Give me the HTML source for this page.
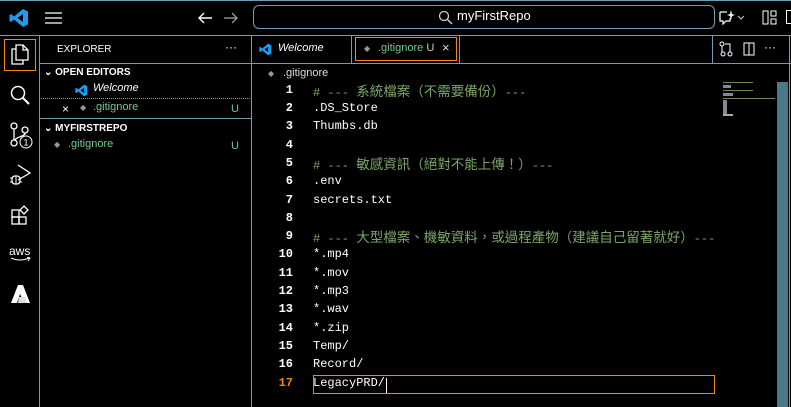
<!DOCTYPE html>
<html><head><meta charset="utf-8"><style>
*{margin:0;padding:0;box-sizing:border-box}
body{width:791px;height:407px;background:#000;overflow:hidden;position:relative;font-family:"Segoe UI","Liberation Sans",sans-serif;color:#fff}
.a{position:absolute}
.b{background:#6f9fb3}
.ln{position:absolute;left:253px;width:40px;text-align:right;font-family:"Liberation Mono",monospace;font-size:12px;color:#fff;font-weight:bold}
.cd{position:absolute;left:313px;font-family:"Liberation Mono","Noto Sans CJK TC",monospace;font-size:12px;color:#fff;white-space:pre}
.cm{color:#7ca668}
.cj{font-family:"Noto Sans CJK TC",sans-serif;font-size:13.5px;line-height:14px}
.sm{font-size:11px}
.g{color:#73c991}
</style></head><body>
<div class="a b" style="left:0;top:0;width:791px;height:1px"></div>
<div class="a b" style="left:0;top:35px;width:791px;height:1px"></div>
<svg class="a" style="left:9px;top:8px" width="20" height="20" viewBox="0 0 20 20"><path d="M14 1 L19 3.5 V16.5 L14 19 L5 11.5 L2 14 L0.5 13 V7 L2 6 L5 8.5 Z M14 6 L8.5 10 L14 14 Z" fill="#1f9cf0"/></svg>
<svg class="a" style="left:45px;top:11px" width="18" height="14"><path d="M0 2H17M0 7H17M0 12H17" stroke="#fff" stroke-width="1.3"/></svg>
<svg class="a" style="left:197px;top:10px" width="16" height="16"><path d="M15 8H2M7 3L2 8L7 13" stroke="#fff" fill="none" stroke-width="1.4"/></svg>
<svg class="a" style="left:223px;top:10px" width="16" height="16"><path d="M1 8H14M9 3L14 8L9 13" stroke="#aaa" fill="none" stroke-width="1.2"/></svg>
<div class="a" style="left:253px;top:5px;width:462px;height:24px;border:1px solid #6f9fb3;border-radius:6px"></div>
<svg class="a" style="left:438px;top:10px" width="15" height="15"><circle cx="6" cy="6" r="4.5" stroke="#ccc" fill="none" stroke-width="1.3"/><path d="M9.5 9.5L14 14" stroke="#ccc" stroke-width="1.5"/></svg>
<div class="a" style="left:457px;top:8px;font-size:13px">myFirstRepo</div>
<svg class="a" style="left:718px;top:8px" width="30" height="18"><path d="M2 4H9M2 4V13H5V16L8 13H12V10" stroke="#fff" fill="none" stroke-width="1.2"/><path d="M13 2L14 6L17 7L14 8L13 12L12 8L9 7L12 6Z" fill="#fff"/><path d="M20 8L23 11L26 8" stroke="#ccc" fill="none"/></svg>
<svg class="a" style="left:762px;top:10px" width="16" height="16"><rect x="1" y="1" width="5" height="13" stroke="#fff" fill="none"/><rect x="9" y="1" width="5" height="5" stroke="#fff" fill="none"/><rect x="9" y="9" width="5" height="5" stroke="#fff" fill="none"/></svg>
<div class="a" style="left:786px;top:10px;width:5px;height:14px;border:1px solid #fff;border-right:none"></div>
<div class="a b" style="left:39px;top:36px;width:1px;height:371px"></div>
<div class="a" style="left:4px;top:39px;width:32px;height:32px;border:1px solid #f38518"></div>
<svg class="a" style="left:10px;top:44px" width="20" height="22"><path d="M6 1H13L18 6V16H6Z M13 1V6H18 M6 5H2V20H13V16" stroke="#fff" fill="none" stroke-width="1.3"/></svg>
<svg class="a" style="left:9px;top:84px" width="22" height="22"><circle cx="9" cy="9" r="6.5" stroke="#fff" fill="none" stroke-width="1.5"/><path d="M13.5 13.5L20 20" stroke="#fff" stroke-width="2"/></svg>
<svg class="a" style="left:9px;top:122px" width="26" height="28"><circle cx="5" cy="4" r="3" stroke="#fff" fill="none" stroke-width="1.3"/><circle cx="5" cy="21" r="3" stroke="#fff" fill="none" stroke-width="1.3"/><circle cx="16" cy="8" r="3" stroke="#fff" fill="none" stroke-width="1.3"/><path d="M5 7V18M16 11C16 15 8 14 6 18" stroke="#fff" fill="none" stroke-width="1.3"/><circle cx="17" cy="20" r="6" fill="#000" stroke="#fff"/><text x="17" y="23.5" font-size="9" fill="#fff" text-anchor="middle" font-family="Liberation Sans">1</text></svg>
<svg class="a" style="left:9px;top:163px" width="24" height="24"><path d="M9 2L21 10L9 17" stroke="#fff" fill="none" stroke-width="1.3"/><rect x="3" y="13" width="8" height="8" rx="3" stroke="#fff" fill="none" stroke-width="1.3"/><path d="M1 15H3M1 19H3M11 15H13M11 19H13M7 13V21" stroke="#fff"/></svg>
<svg class="a" style="left:10px;top:205px" width="22" height="22"><rect x="2" y="5" width="7" height="7" stroke="#fff" fill="none" stroke-width="1.3"/><rect x="2" y="12" width="7" height="7" stroke="#fff" fill="none" stroke-width="1.3"/><rect x="9" y="12" width="7" height="7" stroke="#fff" fill="none" stroke-width="1.3"/><path d="M14 1L18 5L14 9L10 5Z" stroke="#fff" fill="none" stroke-width="1.3"/></svg>
<div class="a" style="left:9px;top:244px;font-size:12px;color:#fff">aws</div>
<svg class="a" style="left:10px;top:257px" width="22" height="6"><path d="M1 1Q10 5 19 1M17 0L20 1L18 4" stroke="#fff" fill="none"/></svg>
<svg class="a" style="left:10px;top:284px" width="22" height="20"><path d="M8 1H13L7 19H1Z" fill="#fff"/><path d="M13 1L20 19H14L10 10Z" fill="#fff"/><path d="M9 13H15L17 19H8Z" fill="#ddd"/></svg>
<div class="a b" style="left:251px;top:36px;width:1px;height:371px"></div>
<div class="a" style="left:57px;top:44px;font-size:10px">EXPLORER</div>
<div class="a" style="left:225px;top:40px;font-size:12px">···</div>
<div class="a b" style="left:40px;top:63px;width:211px;height:1px"></div>
<div class="a" style="left:44px;top:67px;font-size:10px;font-weight:bold">⌄ OPEN EDITORS</div>
<svg class="a" style="left:75px;top:84px" width="13" height="13" viewBox="0 0 20 20"><path d="M14 1 L19 3.5 V16.5 L14 19 L5 11.5 L2 14 L0.5 13 V7 L2 6 L5 8.5 Z M14 6 L8.5 10 L14 14 Z" fill="#1f9cf0"/></svg>
<div class="a" style="left:93px;top:82px;font-size:11px;font-style:italic">Welcome</div>
<div class="a" style="left:41px;top:98px;width:209px;border-top:1px dotted #f38518"></div>
<div class="a" style="left:62px;top:102px;font-size:12px">×</div>
<div class="a" style="left:80px;top:103px;font-size:8px;color:#999">◆</div>
<div class="a g sm" style="left:93px;top:101px">.gitignore</div>
<div class="a g sm" style="left:231px;top:103px">U</div>
<div class="a b" style="left:40px;top:118px;width:211px;height:1px"></div>
<div class="a" style="left:44px;top:123px;font-size:10px;font-weight:bold">⌄ MYFIRSTREPO</div>
<div class="a" style="left:54px;top:140px;font-size:8px;color:#999">◆</div>
<div class="a g sm" style="left:68px;top:138px">.gitignore</div>
<div class="a g sm" style="left:231px;top:140px">U</div>
<div class="a b" style="left:252px;top:63px;width:539px;height:1px"></div>
<div class="a b" style="left:351px;top:36px;width:1px;height:27px"></div>
<div class="a b" style="left:459px;top:36px;width:1px;height:27px"></div>
<div class="a b" style="left:712px;top:36px;width:1px;height:27px"></div>
<svg class="a" style="left:259px;top:43px" width="13" height="13" viewBox="0 0 20 20"><path d="M14 1 L19 3.5 V16.5 L14 19 L5 11.5 L2 14 L0.5 13 V7 L2 6 L5 8.5 Z M14 6 L8.5 10 L14 14 Z" fill="#1f9cf0"/></svg>
<div class="a" style="left:278px;top:42px;font-size:11px;font-style:italic">Welcome</div>
<div class="a" style="left:355px;top:37px;width:102px;height:24px;border:1px solid #f38518"></div>
<div class="a" style="left:364px;top:44px;font-size:8px;color:#999">◆</div>
<div class="a g sm" style="left:378px;top:42px">.gitignore <span style="color:#ccc">U</span></div>
<div class="a" style="left:442px;top:40px;font-size:13px;color:#ddd">×</div>
<svg class="a" style="left:719px;top:41px" width="14" height="16"><circle cx="3" cy="3" r="2" stroke="#fff" fill="none"/><circle cx="11" cy="13" r="2" stroke="#fff" fill="none"/><circle cx="4" cy="13" r="2" stroke="#fff" fill="none"/><path d="M3 5V11M6 3H11V11" stroke="#fff" fill="none"/></svg>
<svg class="a" style="left:743px;top:42px" width="12" height="14"><rect x="1" y="1" width="10" height="12" stroke="#fff" fill="none"/><path d="M6 1V13" stroke="#fff"/></svg>
<div class="a" style="left:764px;top:40px;font-size:12px">···</div>
<div class="a" style="left:268px;top:69px;font-size:8px;color:#999">◆</div>
<div class="a" style="left:283px;top:67px;font-size:11px;color:#ddd">.gitignore</div>
<div class="ln" style="top:83px">1</div><div class="cd cm" style="top:83px"># --- <span class="cj">系統檔案（不需要備份）</span>---</div>
<div class="ln" style="top:101px">2</div><div class="cd" style="top:101px">.DS_Store</div>
<div class="ln" style="top:119px">3</div><div class="cd" style="top:119px">Thumbs.db</div>
<div class="ln" style="top:138px">4</div>
<div class="ln" style="top:156px">5</div><div class="cd cm" style="top:156px"># --- <span class="cj">敏感資訊（絕對不能上傳！）</span>---</div>
<div class="ln" style="top:174px">6</div><div class="cd" style="top:174px">.env</div>
<div class="ln" style="top:193px">7</div><div class="cd" style="top:193px">secrets.txt</div>
<div class="ln" style="top:211px">8</div>
<div class="ln" style="top:229px">9</div><div class="cd cm" style="top:229px"># --- <span class="cj">大型檔案、機敏資料，或過程產物（建議自己留著就好）</span>---</div>
<div class="ln" style="top:247px">10</div><div class="cd" style="top:247px">*.mp4</div>
<div class="ln" style="top:266px">11</div><div class="cd" style="top:266px">*.mov</div>
<div class="ln" style="top:284px">12</div><div class="cd" style="top:284px">*.mp3</div>
<div class="ln" style="top:302px">13</div><div class="cd" style="top:302px">*.wav</div>
<div class="ln" style="top:321px">14</div><div class="cd" style="top:321px">*.zip</div>
<div class="ln" style="top:339px">15</div><div class="cd" style="top:339px">Temp/</div>
<div class="ln" style="top:357px">16</div><div class="cd" style="top:357px">Record/</div>
<div class="a" style="left:313px;top:375px;width:402px;height:19px;border:1px solid #f38518"></div>
<div class="ln" style="top:376px;color:#f38518">17</div><div class="cd" style="top:376px">LegacyPRD/</div>
<div class="a" style="left:386px;top:378px;width:1px;height:15px;background:#fff"></div>
<div class="a" style="left:723px;top:82px;width:30px;height:1px;background:#6a8a5a"></div>
<div class="a" style="left:723px;top:85px;width:8px;height:3px;background:#888"></div>
<div class="a" style="left:723px;top:90px;width:30px;height:1px;background:#6a8a5a"></div>
<div class="a" style="left:723px;top:93px;width:10px;height:3px;background:#888"></div>
<div class="a" style="left:723px;top:98px;width:52px;height:1px;background:#6a8a5a"></div>
<div class="a" style="left:723px;top:100px;width:4px;height:14px;background:#888"></div>
<div class="a" style="left:723px;top:114px;width:10px;height:2px;background:#aaa"></div>
<div class="a" style="left:777px;top:82px;width:11px;height:325px;background:#4a7a8a"></div>
<div class="a b" style="left:789px;top:36px;width:1px;height:371px"></div>
</body></html>
